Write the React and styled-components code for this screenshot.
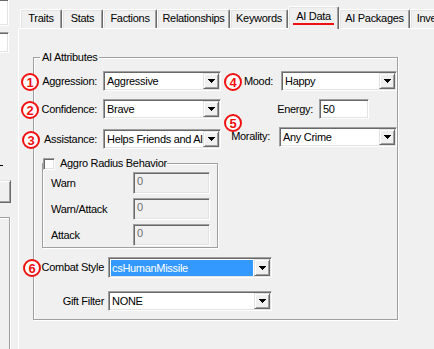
import React from 'react';
import styled, { createGlobalStyle, css } from 'styled-components';

const GlobalStyle = createGlobalStyle`
  * { box-sizing: border-box; }
  html, body { margin: 0; padding: 0; background: #f0f0f0; }
  body {
    font-family: "Liberation Sans", Arial, sans-serif;
    font-size: 11px;
    letter-spacing: -0.3px;
    color: #000;
  }
`;

const sunken = css`
  border: 1px solid;
  border-color: #a0a0a0 #fff #fff #a0a0a0;
  box-shadow: inset 1px 1px 0 #696969, inset -1px -1px 0 #e3e3e3;
`;

const raised = css`
  border: 1px solid;
  border-color: #e3e3e3 #696969 #696969 #e3e3e3;
  box-shadow: inset 1px 1px 0 #fff, inset -1px -1px 0 #a0a0a0;
`;

const etched = css`
  border: 1px solid #a0a0a0;
  box-shadow: 1px 1px 0 #fff, inset 1px 1px 0 #fff;
`;

const Screen = styled.div`
  display: flex;
  width: 434px;
  height: 349px;
  overflow: hidden;
`;

/* left dialog strip, mostly cut off */
const SideStrip = styled.div`
  width: 11px;
  flex-shrink: 0;
  display: flex;
  flex-direction: column;
`;

const SideEdit = styled.div`
  ${sunken};
  background: #fff;
  width: 20px;
  height: ${p => p.$h}px;
  margin: ${p => p.$top}px 0 0 -11px;
`;

const SideTick = styled.div`
  width: 3px;
  height: 1px;
  background: #000;
  margin-top: 112px;
`;

const SideButton = styled.div`
  ${raised};
  background: #f0f0f0;
  width: 31px;
  height: 23px;
  margin: 14px 0 0 -20px;
`;

const SideList = styled.div`
  flex: 1;
  width: 21px;
  margin: 14px 0 0 -11px;
  border-top: 1px solid #a0a0a0;
  border-right: 1px solid #a0a0a0;
  box-shadow: 1px 0 0 #fff, inset 0 1px 0 #fff;
`;

/* tab control */
const TabControl = styled.div`
  flex: 1;
  margin-left: 7px;
  padding-top: 6px;
  display: flex;
  flex-direction: column;
  min-width: 0;
`;

const TabRow = styled.div`
  display: flex;
  align-items: flex-end;
  height: 22px;
  padding-left: 2px;
  position: relative;
  z-index: 1;
`;

const Tab = styled.div`
  flex-shrink: 0;
  width: ${p => p.$w}px;
  height: ${p => (p.$active ? 23 : 19)}px;
  margin-bottom: ${p => (p.$active ? -1 : 0)}px;
  padding-top: ${p => (p.$active ? 3 : 2)}px;
  background: #f0f0f0;
  border: 1px solid;
  border-bottom: none;
  border-color: #fff #696969 transparent #fff;
  border-radius: 2px 2px 0 0;
  box-shadow: inset -1px 0 0 #a0a0a0, inset 1px 1px 0 #e3e3e3;
  display: flex;
  justify-content: center;
  align-items: flex-start;
  line-height: 13px;
  white-space: nowrap;
`;

const Marked = styled.span`
  padding: 0 3px;
  border-bottom: 2px solid #ee1111;
`;

const Page = styled.div`
  flex: 1;
  border-top: 1px solid #fff;
  border-left: 1px solid #fff;
  padding: 28px 0 0 14px;
`;

/* group boxes */
const Group = styled.div`
  ${etched};
  position: relative;
  display: flex;
  flex-direction: column;
  width: ${p => p.$w}px;
  margin: ${p => p.$margin};
  padding-bottom: ${p => p.$pb}px;
`;

const Legend = styled.div`
  align-self: flex-start;
  display: flex;
  align-items: center;
  gap: 5px;
  height: 13px;
  line-height: 13px;
  margin: -7px 0 0 ${p => p.$left}px;
  padding: 0 ${p => p.$pad}px;
  background: #f0f0f0;
`;

const Row = styled.div`
  display: flex;
  align-items: center;
  height: ${p => p.$h || 20}px;
  margin-top: ${p => p.$top}px;
  padding-left: ${p => p.$indent || 0}px;
`;

const Label = styled.div`
  flex-shrink: 0;
  width: ${p => p.$w}px;
  margin-right: ${p => p.$gap}px;
  margin-top: ${p => (p.$lift ? -5 : 0)}px;
  text-align: ${p => p.$align || 'right'};
  line-height: 13px;
  white-space: nowrap;
`;

const Combo = styled.div`
  ${sunken};
  flex-shrink: 0;
  display: flex;
  width: ${p => p.$w}px;
  height: ${p => p.$h || 20}px;
  margin-top: ${p => (p.$lift ? -4 : 0)}px;
  padding: 1px;
  background: #fff;
`;

const ComboText = styled.div`
  flex: 1;
  min-width: 0;
  overflow: hidden;
  white-space: nowrap;
  display: flex;
  align-items: center;
  padding-left: ${p => (p.$selected ? 1 : 2)}px;
  margin: ${p => (p.$selected ? '1px 1px 0 1px' : 0)};
  background: ${p => (p.$selected ? '#3399ff' : 'transparent')};
  color: ${p => (p.$selected ? '#fff' : '#000')};
`;

const ComboButton = styled.div`
  ${raised};
  flex-shrink: 0;
  width: 16px;
  background: #f0f0f0;
  display: flex;
  align-items: center;
  justify-content: center;
`;

const Edit = styled.div`
  ${sunken};
  flex-shrink: 0;
  width: ${p => p.$w}px;
  height: ${p => p.$h || 20}px;
  padding: ${p => (p.$disabled ? '2px 3px' : '0 3px')};
  display: flex;
  align-items: ${p => (p.$disabled ? 'flex-start' : 'center')};
  line-height: 13px;
  background: ${p => (p.$disabled ? '#f0f0f0' : '#fff')};
  color: ${p => (p.$disabled ? '#6d6d6d' : '#000')};
`;

const CheckBox = styled.div`
  ${sunken};
  width: 12px;
  height: 12px;
  background: #fff;
`;

/* red annotation circles over the form */
const Badge = styled.div`
  position: absolute;
  left: ${p => p.$x}px;
  top: ${p => p.$y}px;
  width: 18px;
  height: 18px;
  border: 2px solid #f01010;
  border-radius: 50%;
  background: #fff;
  color: #f01010;
  font-weight: bold;
  font-size: 13px;
  letter-spacing: 0;
  display: flex;
  align-items: center;
  justify-content: center;
  line-height: 1;
`;

const Arrow = () => (
  <svg width="7" height="4" viewBox="0 0 7 4" shapeRendering="crispEdges">
    <path d="M0 0h7v1H0zM1 1h5v1H1zM2 2h3v1H2zM3 3h1v1H3z" fill="#000" />
  </svg>
);

const Dropdown = ({ w, h, value, selected, lift }) => (
  <Combo $w={w} $h={h} $lift={lift}>
    <ComboText $selected={selected}>{value}</ComboText>
    <ComboButton><Arrow /></ComboButton>
  </Combo>
);

const tabs = [
  ['Traits', 42],
  ['Stats', 41],
  ['Factions', 54],
  ['Relationships', 73],
  ['Keywords', 58],
  ['AI Data', 51, true],
  ['AI Packages', 71],
  ['Inventory', 56],
];

const radius = ['Warn', 'Warn/Attack', 'Attack'];

export default function App() {
  return (
    <Screen>
      <GlobalStyle />
      <SideStrip>
        <SideEdit $top={-1} $h={27} />
        <SideEdit $top={6} $h={21} />
        <SideTick />
        <SideButton />
        <SideList />
      </SideStrip>

      <TabControl>
        <TabRow>
          {tabs.map(([name, w, active]) => (
            <Tab key={name} $w={w} $active={active}>
              {active ? <Marked>{name}</Marked> : name}
            </Tab>
          ))}
        </TabRow>

        <Page>
          <Group $w={365} $margin="0" $pb={8}>
            <Legend $left={6} $pad={2}>AI Attributes</Legend>

            <Row $top={7}>
              <Label $w={63} $gap={6}>Aggression:</Label>
              <Dropdown w={118} value="Aggressive" />
              <Label $w={52} $gap={8}>Mood:</Label>
              <Dropdown w={116} value="Happy" />
            </Row>

            <Row $top={8}>
              <Label $w={63} $gap={6}>Confidence:</Label>
              <Dropdown w={118} value="Brave" />
              <Label $w={92} $gap={6}>Energy:</Label>
              <Edit $w={50}>50</Edit>
            </Row>

            <Row $top={10}>
              <Label $w={63} $gap={6}>Assistance:</Label>
              <Dropdown w={118} value="Helps Friends and Allies" />
              <Label $w={49} $gap={9} $lift>Morality:</Label>
              <Dropdown w={118} value="Any Crime" lift />
            </Row>

            <Group $w={176} $margin="14px 0 0 8px" $pb={1}>
              <Legend $left={0} $pad={0}>
                <CheckBox />
                <span>Aggro Radius Behavior</span>
              </Legend>
              {radius.map((name, i) => (
                <Row key={name} $top={i === 0 ? 2 : 4} $h={22} $indent={8}>
                  <Label $w={82} $gap={0} $align="left">{name}</Label>
                  <Edit $w={77} $h={22} $disabled>0</Edit>
                </Row>
              ))}
            </Group>

            <Row $top={9} $h={21}>
              <Label $w={70} $gap={4}>Combat Style</Label>
              <Dropdown w={164} h={21} value="csHumanMissile" selected />
            </Row>

            <Row $top={13}>
              <Label $w={70} $gap={4}>Gift Filter</Label>
              <Dropdown w={164} value="NONE" />
            </Row>

            <Badge $x={-13} $y={15}>1</Badge>
            <Badge $x={-13} $y={43}>2</Badge>
            <Badge $x={-12} $y={73}>3</Badge>
            <Badge $x={190} $y={15}>4</Badge>
            <Badge $x={190} $y={56}>5</Badge>
            <Badge $x={-11} $y={201}>6</Badge>
          </Group>
        </Page>
      </TabControl>
    </Screen>
  );
}
